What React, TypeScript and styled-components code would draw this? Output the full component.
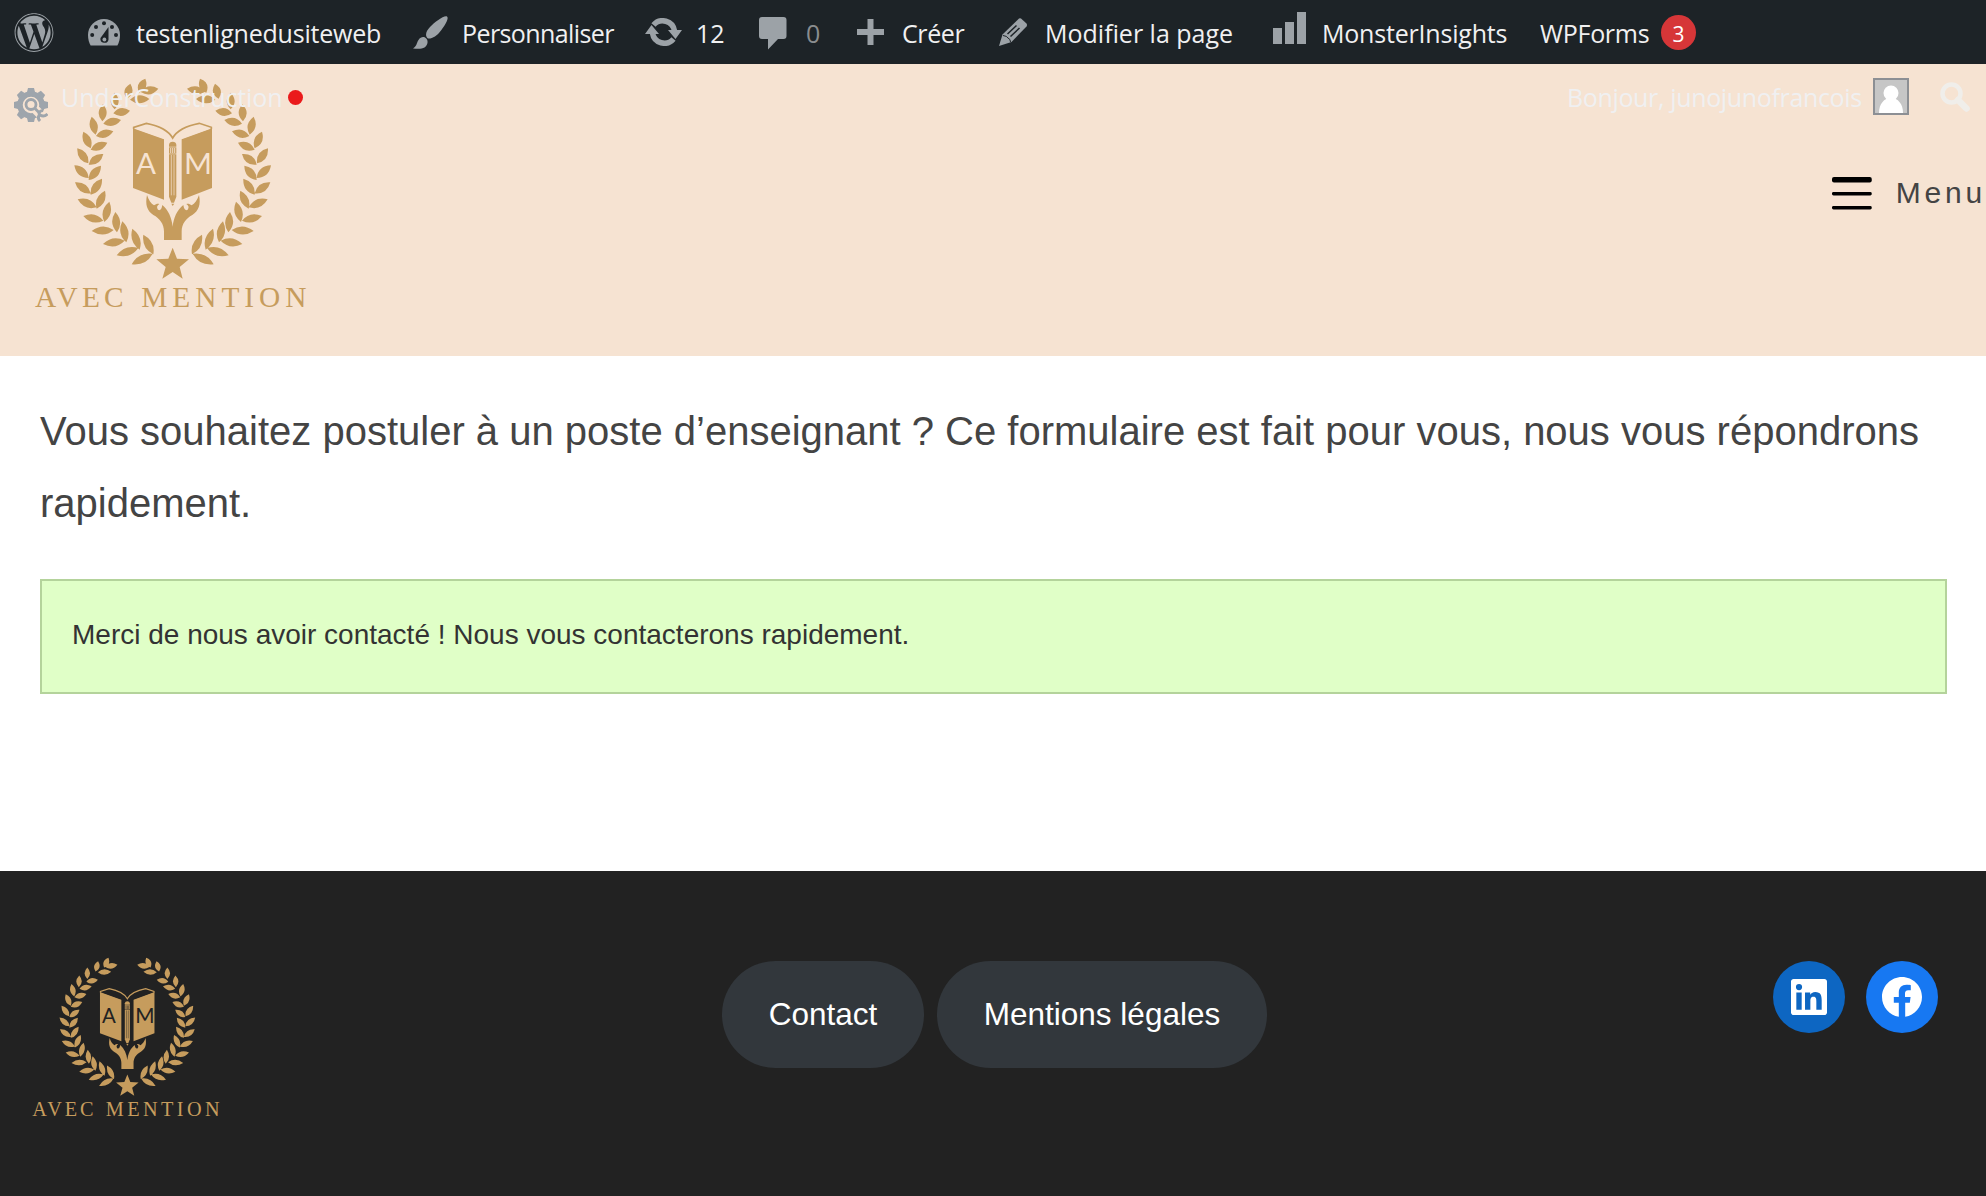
import React from "react";
import styled, { createGlobalStyle } from "styled-components";
import { FaWordpress } from "react-icons/fa";

const Global = createGlobalStyle`
  * { box-sizing: border-box; }
  body { margin: 0; background: #fff; }
`;

const GOLD = "#c69c5d";
const CREAM = "#f6e3d2";
const DARK = "#222222";

const Page = styled.div`
  position: relative;
  width: 1986px;
  height: 1196px;
  overflow: hidden;
  display: flex;
  flex-direction: column;
  font-family: "Liberation Sans", Arial, sans-serif;
`;

const AdminBar = styled.nav`
  display: flex;
  flex: none;
  height: 64px;
  padding-left: 14px;
  background: #1d2327;
  color: #f0f0f1;
  font: 25px/64px "Open Sans", "Noto Sans", sans-serif;
`;

const BarItem = styled.div<{ $width: number }>`
  display: flex;
  align-items: center;
  flex: none;
  width: ${(p) => p.$width}px;
  height: 64px;
`;

const IconSlot = styled.span<{ $width: number; $drop?: number; $end?: boolean }>`
  display: flex;
  flex: none;
  justify-content: ${(p) => (p.$end ? "flex-end" : "flex-start")};
  width: ${(p) => p.$width}px;
  padding-top: ${(p) => Math.max(p.$drop ?? 0, 0)}px;
  padding-bottom: ${(p) => Math.max(-(p.$drop ?? 0), 0)}px;
  color: #9ca2a7;
  svg { display: block; }
`;

const Label = styled.span<{ $track?: number; $muted?: boolean }>`
  padding-top: 2px;
  white-space: nowrap;
  letter-spacing: ${(p) => p.$track ?? 0}px;
  color: ${(p) => (p.$muted ? "#8a8d8f" : "inherit")};
`;

const Badge = styled.span`
  width: 35px;
  height: 35px;
  margin-left: auto;
  border-radius: 50%;
  background: #d63638;
  color: #fff;
  font-size: 21px;
  line-height: 38px;
  text-align: center;
`;

const SecondBar = styled.div`
  position: absolute;
  z-index: 2;
  top: 64px;
  left: 0;
  right: 0;
  display: flex;
  align-items: center;
  height: 64px;
  padding: 0 16px 0 14px;
  color: #f0f0f1;
  font: 25px/64px "Open Sans", "Noto Sans", sans-serif;
`;

const StatusDot = styled.span`
  flex: none;
  width: 15px;
  height: 15px;
  margin: 2px 0 0 auto;
  border-radius: 50%;
  background: #ea1a1b;
`;

const PluginStatus = styled.div`
  display: flex;
  align-items: center;
  width: 289px;
`;

const Account = styled.div`
  display: flex;
  align-items: center;
  justify-content: space-between;
  width: 342px;
  margin-left: auto;
`;

const Avatar = styled.span`
  display: block;
  flex: none;
  width: 36px;
  height: 37px;
  border: 2px solid #8c8f94;
  background: #c6c6c6;
  svg { display: block; }
`;

const SiteHeader = styled.header`
  display: flex;
  flex: none;
  justify-content: space-between;
  height: 292px;
  padding: 2px 0 0 20px;
  background: ${CREAM};
`;

const MenuToggle = styled.button`
  display: flex;
  align-items: center;
  align-self: flex-start;
  gap: 24px;
  width: 154px;
  height: 60px;
  margin-top: 98px;
  padding: 0;
  border: 0;
  background: none;
  color: #444;
  font: 30px/60px "Liberation Sans", Arial, sans-serif;
  letter-spacing: 3.8px;
  white-space: nowrap;
`;

const MenuText = styled.span`
  height: 60px;
  line-height: 57px;
`;

const Main = styled.main`
  flex: none;
  height: 515px;
  padding: 39px 39px 0 40px;
`;

const Intro = styled.p`
  margin: 0;
  color: #444;
  font-size: 40px;
  line-height: 72px;
`;

const Confirmation = styled.div`
  display: flex;
  align-items: center;
  height: 115px;
  margin-top: 40px;
  padding: 0 30px 4px;
  border: 2px solid #b4d39b;
  background: #e0ffc7;
  color: #333;
  font-size: 28px;
`;

const Footer = styled.footer`
  display: flex;
  flex: 1;
  align-items: flex-start;
  padding: 78px 48px 0 22px;
  background: ${DARK};
`;

const FooterNav = styled.div`
  display: flex;
  gap: 13px;
  margin: 12px 0 0 493px;
`;

const Pill = styled.a<{ $width: number }>`
  width: ${(p) => p.$width}px;
  height: 107px;
  border-radius: 54px;
  background: #32373c;
  color: #fff;
  font-size: 31.5px;
  line-height: 107px;
  text-align: center;
`;

const Social = styled.div`
  display: flex;
  gap: 21px;
  margin: 12px 0 0 auto;
`;

const SocialLink = styled.a<{ $color: string }>`
  display: grid;
  place-items: center;
  width: 72px;
  height: 72px;
  border-radius: 50%;
  background: ${(p) => p.$color};
`;

type Leaf = [number, number, number, number];

// Each leaf: stem point, then tip, for the left branch of the wreath.
const LEAVES: Leaf[] = [
  [357, 80, 376, 38], [362, 78, 415, 68],
  [320, 98, 331, 53], [330, 101, 388, 99],
  [284, 130, 284, 80], [280, 142, 330, 134],
  [247, 166, 249, 115], [250, 173, 303, 162],
  [227, 206, 215, 152], [228, 210, 280, 196],
  [212, 247, 190, 197], [212, 251, 262, 230],
  [205, 292, 172, 247], [206, 296, 250, 264],
  [206, 336, 163, 298], [206, 342, 243, 299],
  [212, 382, 165, 349], [212, 386, 246, 338],
  [230, 424, 173, 400], [230, 428, 255, 374],
  [250, 464, 190, 450], [253, 468, 268, 407],
  [281, 492, 215, 495], [291, 499, 286, 438],
  [314, 524, 249, 534], [319, 529, 307, 466],
  [355, 546, 290, 568], [359, 551, 337, 488],
  [398, 563, 335, 595], [400, 565, 370, 506],
];

const leafPath = ([x, y, tx, ty]: Leaf) => {
  const dx = tx - x;
  const dy = ty - y;
  const len = Math.hypot(dx, dy);
  const nx = (-dy / len) * 24;
  const ny = (dx / len) * 24;
  const mx = x + dx * 0.48;
  const my = y + dy * 0.48;
  return `M${x} ${y}Q${mx + nx} ${my + ny} ${tx} ${ty}Q${mx - nx} ${my - ny} ${x} ${y}Z`;
};

const BRANCH = LEAVES.map(leafPath).join("");

const Logo = ({ width, height, bg }: { width: number; height: number; bg: string }) => (
  <svg width={width} height={height} viewBox="0 0 900 765" fill={GOLD}>
    <path d={BRANCH} />
    <path d={BRANCH} transform="translate(916 0) scale(-1 1)" />
    <path d="M339 187L432 220V401L339 366ZM576 187L485 220V401L576 366Z" />
    <path
      d="M341 189V184L379 172Q440 184 458 216Q476 184 538 172L574 184V189"
      fill="none" stroke={GOLD} strokeWidth="5"
    />
    <path d="M347 188L379 178Q432 190 453 219L432 218ZM569 188L538 178Q485 190 463 219L485 218Z" fill={bg} />
    <path d="M447 242V236Q448 227 458 227Q468 227 469 236V242Z" />
    <path d="M447 244H469V263H447Z" />
    <path d="M452 246V261M458 246V261M464 246V261" stroke={bg} strokeWidth="2.5" />
    <path d="M447 265H469V392L462 410H454L447 392Z" />
    <path d="M454 267V388M462 267V388" stroke={bg} strokeWidth="2" />
    <path d="M454 413H463L458 420Z" />
    <g fill={bg} fontFamily="Lato, sans-serif" fontSize="88" textAnchor="middle">
      <text x="378" y="323" textLength="60" lengthAdjust="spacingAndGlyphs">A</text>
      <text x="534" y="323" textLength="84" lengthAdjust="spacingAndGlyphs">M</text>
    </g>
    <path d="M381 387C386 402 393 413 402 418C408 413 414 412 418 414C411 418 409 425 414 431C419 435 425 431 427 417C445 432 455 455 458 482C461 455 471 432 490 417C492 431 498 435 503 431C508 425 506 418 499 414C503 412 509 413 515 418C524 413 532 402 537 387C543 416 536 434 517 447C498 457 485 474 485 496V522H432V496C432 474 419 457 400 447C381 434 375 416 381 387Z" />
    <path d="M458 545L471 578L507 580L479 603L488 638L458 618L427 638L437 603L409 580L445 578Z" />
    <g fontFamily="'Liberation Serif', serif" fontSize="88">
      <text x="45" y="724" textLength="266">AVEC</text>
      <text x="364" y="724" textLength="495">MENTION</text>
    </g>
  </svg>
);

const GaugeIcon = () => (
  <svg width="32" height="27" viewBox="0 0 32 27">
    <path fill="currentColor" d="M16 0a16 16 0 0 1 16 16c0 4-1 8-2.600 10.500H2.600C1 24 0 20 0 16A16 16 0 0 1 16 0Z" />
    <g fill="#1d2327">
      <circle cx="16" cy="4.200" r="2" /><circle cx="8" cy="8" r="2" />
      <circle cx="24" cy="8" r="2" /><circle cx="4.200" cy="16" r="2" /><circle cx="28" cy="16" r="2" />
      <path d="M20.500 8V20.500A4 4 0 1 1 12.500 19Z" />
    </g>
    <circle cx="16.400" cy="20.500" r="1.900" fill="currentColor" />
  </svg>
);

const BrushIcon = () => (
  <svg width="35" height="33" viewBox="0 0 35 33" fill="currentColor">
    <path d="M34 .5C36 2 33 8 28 14.500C24 20 19 23 15 22.500C11.500 20 13 15 17 11C22 6 31-1 34 .5Z" />
    <path d="M12 21.500C16 24 15 29 11.500 31.500C9 33 5 32.800 0 32.500C4 30 3.500 27 5.500 24C7.500 21 10 20.500 12 21.500Z" />
  </svg>
);

const RefreshIcon = () => (
  <svg width="37" height="28" viewBox="0 0 37 28">
    <path d="M8.500 7A12 12 0 0 1 29.500 13" fill="none" stroke="currentColor" strokeWidth="5.500" />
    <path d="M28.500 21A12 12 0 0 1 7.500 15" fill="none" stroke="currentColor" strokeWidth="5.500" />
    <path d="M23 12H37L30.500 21ZM14 16H0L6.500 7Z" fill="currentColor" />
  </svg>
);

const CommentIcon = () => (
  <svg width="28" height="33" viewBox="0 0 28 33" fill="currentColor">
    <path d="M3 0H24.500A3 3 0 0 1 27.500 3V19A3 3 0 0 1 24.500 22H19L9 32.500V22H3A3 3 0 0 1 0 19V3A3 3 0 0 1 3 0Z" />
  </svg>
);

const PlusIcon = () => (
  <svg width="27" height="26" viewBox="0 0 27 26" fill="currentColor">
    <path d="M10.500 0H16.500V10H27V16H16.500V26H10.500V16H0V10H10.500Z" />
  </svg>
);

const PencilIcon = () => (
  <svg width="29" height="28" viewBox="0 0 29 28">
    <path fill="currentColor" d="M20 .5Q21 0 22 .5L27.500 5.500Q28.500 7 27.500 8.500L12.500 24L0 28L3.500 16.500Z" />
    <path d="M8.500 16L17.500 7.500M11.500 18.500L20.500 10" fill="none" stroke="#1d2327" strokeWidth="1.500" />
    <path d="M4 17.500Q8 18 9 20Q11.500 21 11.500 24" fill="none" stroke="#1d2327" strokeWidth="1" />
  </svg>
);

const BarsIcon = () => (
  <svg width="33" height="32" viewBox="0 0 33 32" fill="currentColor">
    <path d="M0 16H9V32H0ZM12 10H21V32H12ZM24 0H33V32H24Z" />
  </svg>
);

const GearIcon = () => (
  <svg width="34" height="34" viewBox="0 0 34 34" fill="none" stroke="#9ea5ac">
    <circle cx="17" cy="17" r="11" strokeWidth="5.500" />
    {[0, 45, 90, 135, 180, 225, 270, 315].map((a) => (
      <path key={a} d="M13 4L14 0H20L21 4Z" fill="#9ea5ac" stroke="none" transform={`rotate(${a} 17 17)`} />
    ))}
    <path d="M21 21L34 34" stroke={CREAM} strokeWidth="9" />
    <circle cx="17" cy="16.500" r="5" strokeWidth="2.800" />
    <path d="M21 20.500L26 25.500" strokeWidth="2.800" />
    <path d="M29 22.500Q24 23 25.500 27Q23 30 26 33M26 27Q30 29.500 33.500 26" strokeWidth="3" />
  </svg>
);

const SearchIcon = () => (
  <svg width="30" height="30" viewBox="0 0 30 30" fill="none" stroke="#f0eeea">
    <circle cx="11.500" cy="11.500" r="9" strokeWidth="4.500" />
    <path d="M18 18L26.500 26.500" strokeWidth="6.500" strokeLinecap="round" />
  </svg>
);

const HamburgerIcon = () => (
  <svg width="40" height="34" viewBox="0 0 40 34" fill="#000">
    <rect y="0" width="40" height="5.500" rx="2" />
    <rect y="15" width="40" height="3.400" rx="1.500" />
    <rect y="29" width="40" height="3.600" rx="1.500" />
  </svg>
);

const App = () => (
  <Page>
    <Global />
    <AdminBar>
      <BarItem $width={74}>
        <IconSlot $width={40} $drop={1}><FaWordpress size={41} /></IconSlot>
      </BarItem>
      <BarItem $width={325}>
        <IconSlot $width={48}><GaugeIcon /></IconSlot>
        <Label $track={-0.2}>testenlignedusiteweb</Label>
      </BarItem>
      <BarItem $width={232}>
        <IconSlot $width={49}><BrushIcon /></IconSlot>
        <Label $track={-0.6}>Personnaliser</Label>
      </BarItem>
      <BarItem $width={114}>
        <IconSlot $width={51}><RefreshIcon /></IconSlot>
        <Label>12</Label>
      </BarItem>
      <BarItem $width={98}>
        <IconSlot $width={47} $drop={2}><CommentIcon /></IconSlot>
        <Label $muted>0</Label>
      </BarItem>
      <BarItem $width={142}>
        <IconSlot $width={45}><PlusIcon /></IconSlot>
        <Label $track={-0.4}>Créer</Label>
      </BarItem>
      <BarItem $width={274}>
        <IconSlot $width={46}><PencilIcon /></IconSlot>
        <Label>Modifier la page</Label>
      </BarItem>
      <BarItem $width={267}>
        <IconSlot $width={49} $drop={-8}><BarsIcon /></IconSlot>
        <Label $track={-0.2}>MonsterInsights</Label>
      </BarItem>
      <BarItem $width={156}>
        <Label $track={-0.3}>WPForms</Label>
        <Badge>3</Badge>
      </BarItem>
    </AdminBar>
    <SecondBar>
      <PluginStatus>
        <IconSlot $width={47} $drop={18}><GearIcon /></IconSlot>
        <Label $track={-0.1}>UnderConstruction</Label>
        <StatusDot />
      </PluginStatus>
      <Account>
        <Label $track={-0.35}>Bonjour, junojunofrancois</Label>
        <Avatar>
          <svg width="32" height="33" viewBox="0 0 32 33" fill="#fff">
            <circle cx="16" cy="13" r="7.500" />
            <path d="M4 33C4 24 9 18 16 18S28 24 28 33Z" />
          </svg>
        </Avatar>
      </Account>
      <IconSlot $width={61} $end $drop={1}><SearchIcon /></IconSlot>
    </SecondBar>
    <SiteHeader>
      <Logo width={300} height={255} bg={CREAM} />
      <MenuToggle>
        <HamburgerIcon />
        <MenuText>Menu</MenuText>
      </MenuToggle>
    </SiteHeader>
    <Main>
      <Intro>
        Vous souhaitez postuler à un poste d’enseignant ? Ce formulaire est fait pour vous, nous vous répondrons rapidement.
      </Intro>
      <Confirmation>Merci de nous avoir contacté ! Nous vous contacterons rapidement.</Confirmation>
    </Main>
    <Footer>
      <Logo width={207} height={176} bg={DARK} />
      <FooterNav>
        <Pill $width={202}>Contact</Pill>
        <Pill $width={330}>Mentions légales</Pill>
      </FooterNav>
      <Social>
        <SocialLink $color="#0d66c2">
          <svg width="48" height="48" viewBox="0 0 24 24" fill="#fff">
            <path d="M19.700 3H4.300C3.582 3 3 3.582 3 4.300v15.400C3 20.418 3.582 21 4.300 21h15.400c.718 0 1.300-.582 1.300-1.300V4.300C21 3.582 20.418 3 19.700 3zM8.339 18.338H5.667v-8.590h2.672v8.590zM7.004 8.574a1.548 1.548 0 1 1 0-3.096 1.548 1.548 0 0 1 0 3.096zM18.339 18.338h-2.669v-4.177c0-.996-.017-2.278-1.387-2.278-1.389 0-1.601 1.086-1.601 2.206v4.249h-2.667v-8.590h2.559v1.174h.037c.356-.675 1.227-1.387 2.526-1.387 2.703 0 3.203 1.779 3.203 4.092v4.711z" />
          </svg>
        </SocialLink>
        <SocialLink $color="#1778f2">
          <svg width="48" height="48" viewBox="0 0 24 24" fill="#fff">
            <path d="M12 2C6.500 2 2 6.500 2 12c0 5 3.700 9.100 8.400 9.900v-7H7.900V12h2.500V9.800c0-2.500 1.500-3.900 3.800-3.900 1.100 0 2.200.2 2.200.2v2.500h-1.300c-1.200 0-1.600.8-1.600 1.600V12h2.800l-.4 2.900h-2.300v7C18.300 21.100 22 17 22 12c0-5.500-4.500-10-10-10z" />
          </svg>
        </SocialLink>
      </Social>
    </Footer>
  </Page>
);

export default App;
